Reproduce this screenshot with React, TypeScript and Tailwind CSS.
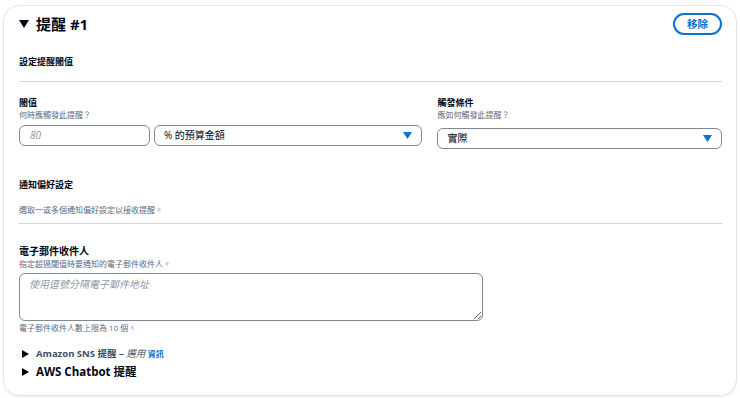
import React from 'react';

const font = { fontFamily: '"Open Sans", "Noto Sans CJK TC", sans-serif' };

function Caret() {
    return (
        <svg width="9" height="7" viewBox="0 0 9 7" className="shrink-0">
            <path d="M0 0 L9 0 L4.5 7 Z" fill="#0972d3" />
        </svg>
    );
}

export default function App() {
    return (
        <div className="w-[740px] h-[398px] bg-white pt-[5px] px-[3px] text-[#000716]" style={font}>
            <div className="h-[391px] rounded-2xl border border-[#e3e5e8] shadow-[0_1px_2px_rgba(0,7,22,0.08)] pl-[15px] pr-[14px] pt-[7px]">

                {/* Header */}
                <div className="flex items-center justify-between h-[22px]">
                    <div className="flex items-center gap-[7px]">
                        <svg width="10" height="8" viewBox="0 0 10 8">
                            <path d="M0 0 L10 0 L5 8 Z" fill="#000716" />
                        </svg>
                        <span className="text-[15px] font-bold leading-none">提醒 #1</span>
                    </div>
                    <button className="h-[22px] w-[49px] rounded-full border-2 border-[#0972d3] text-[#0972d3] text-[10.5px] font-bold leading-none">
                        移除
                    </button>
                </div>

                {/* Threshold */}
                <div className="mt-[21px] text-[9px] font-bold leading-[12px]">設定提醒閾值</div>
                <div className="mt-[13px] h-px bg-[#d1d5db]" />

                <div className="mt-[15px] flex gap-[15px]">
                    <div className="w-[404px]">
                        <div className="text-[9px] font-bold leading-[12px]">閾值</div>
                        <div className="text-[8px] text-[#5f6b7a] leading-[12px]">何時應觸發此提醒？</div>
                        <div className="mt-[4px] flex gap-[4px]">
                            <div className="w-[131px] h-[21px] rounded-[6px] border-[1.5px] border-[#7d8998] flex items-center px-[10px] text-[10px] italic text-[#8d99a8]">
                                80
                            </div>
                            <div className="flex-1 h-[21px] rounded-[6px] border-[1.5px] border-[#7d8998] flex items-center justify-between pl-[9px] pr-[9px] text-[10px]">
                                <span>% 的預算金額</span>
                                <Caret />
                            </div>
                        </div>
                    </div>
                    <div className="w-[285px]">
                        <div className="text-[9px] font-bold leading-[12px]">觸發條件</div>
                        <div className="text-[8px] text-[#5f6b7a] leading-[12px]">應如何觸發此提醒？</div>
                        <div className="mt-[7px] h-[21px] rounded-[6px] border-[1.5px] border-[#7d8998] flex items-center justify-between pl-[9px] pr-[9px] text-[10px]">
                            <span>實際</span>
                            <Caret />
                        </div>
                    </div>
                </div>

                {/* Notification preferences */}
                <div className="mt-[30px] text-[9px] font-bold leading-[12px]">通知偏好設定</div>
                <div className="mt-[13px] text-[8px] text-[#5f6b7a] leading-[12px]">選取一或多個通知偏好設定以接收提醒。</div>
                <div className="mt-[7px] h-px bg-[#d1d5db]" />

                <div className="mt-[21px] text-[10px] font-bold leading-[13px]">電子郵件收件人</div>
                <div className="text-[8px] text-[#5f6b7a] leading-[12px]">指定超過閾值時要通知的電子郵件收件人。</div>
                <textarea
                    className="mt-[3px] block w-[464px] h-[48px] rounded-[6px] border-[1.5px] border-[#7d8998] px-[9px] py-[3px] text-[10px] italic placeholder:text-[#8d99a8] outline-none resize-y"
                    placeholder="使用逗號分隔電子郵件地址"
                />
                <div className="mt-[1px] text-[8px] text-[#5f6b7a] leading-[12px]">電子郵件收件人數上限為 10 個。</div>

                {/* Expandables */}
                <div className="mt-[13px] flex items-center gap-[7px] pl-[3px] h-[14px]">
                    <svg width="7" height="8" viewBox="0 0 7 8">
                        <path d="M0 0 L7 4 L0 8 Z" fill="#000716" />
                    </svg>
                    <span className="text-[9.5px] font-bold text-[#414d5c]">
                        Amazon SNS 提醒 – <span className="italic font-normal">選用</span>{' '}
                        <span className="text-[8px] text-[#0972d3]">資訊</span>
                    </span>
                </div>
                <div className="mt-[3px] flex items-center gap-[7px] pl-[3px] h-[16px]">
                    <svg width="7" height="8" viewBox="0 0 7 8">
                        <path d="M0 0 L7 4 L0 8 Z" fill="#000716" />
                    </svg>
                    <span className="text-[11.5px] font-bold">AWS Chatbot 提醒</span>
                </div>
            </div>
        </div>
    );
}
